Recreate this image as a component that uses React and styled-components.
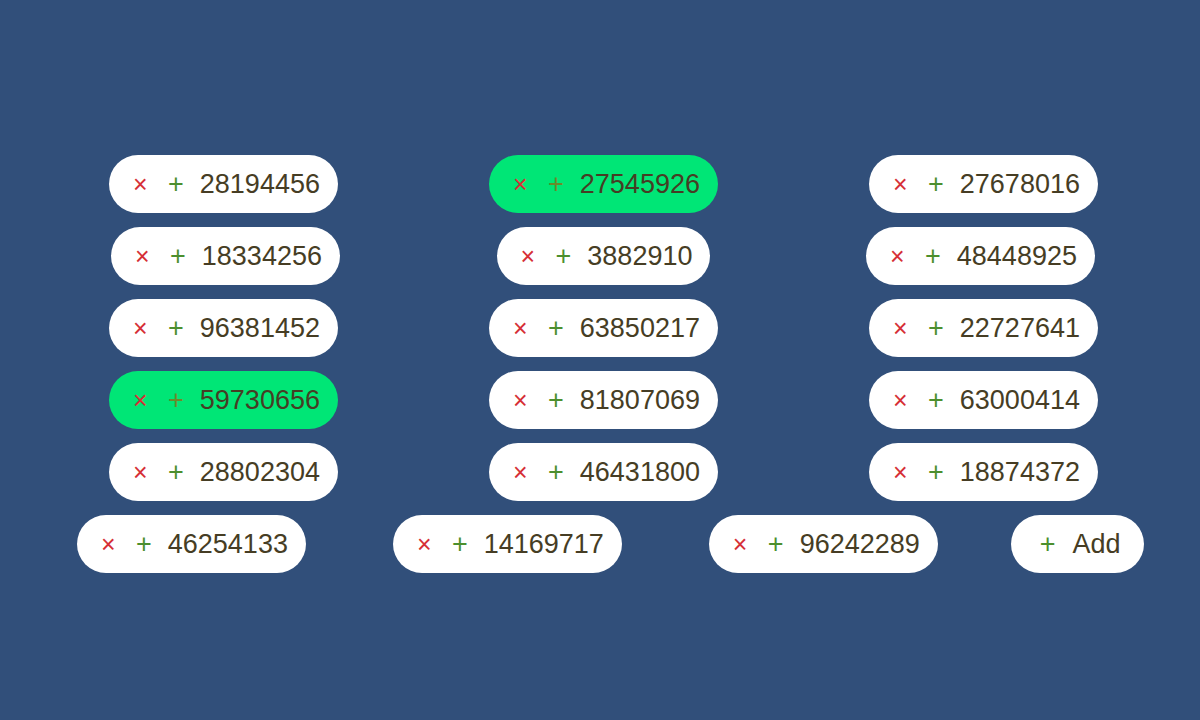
import React from 'react';
import styled, { createGlobalStyle } from 'styled-components';

const GlobalStyle = createGlobalStyle`
  html, body {
    margin: 0;
    padding: 0;
    background: #314f7a;
  }
  body {
    font-family: "Liberation Sans", Arial, sans-serif;
  }
`;

const Page = styled.div`
  width: 1200px;
  height: 720px;
  background: #314f7a;
  box-sizing: border-box;
  padding-top: 155px;
  overflow: hidden;
`;

const Columns = styled.div`
  display: grid;
  grid-template-columns: repeat(3, 229px);
  column-gap: 151px;
  padding-left: 109px;
`;

const Column = styled.div`
  display: flex;
  flex-direction: column;
  align-items: center;
  gap: 14px;
`;

const BottomRow = styled.div`
  display: flex;
  align-items: center;
  gap: 87px;
  padding-left: 77px;
  margin-top: 14px;
`;

const Pill = styled.div`
  display: flex;
  align-items: center;
  box-sizing: border-box;
  height: 58px;
  border-radius: 29px;
  padding: ${p => (p.$add ? '0 23px 0 29px' : '0 18px 0 24px')};
  background: ${p => (p.$active ? '#00e676' : '#ffffff')};
  margin-left: ${p => p.$shift || 0}px;
  margin-right: ${p => -(p.$shift || 0)}px;
  ${p => p.$pull && `margin-left: ${p.$pull}px;`}
  white-space: nowrap;
`;

const Remove = styled.span`
  color: #d62f36;
  font-size: 25px;
  line-height: 1;
  width: 14px;
  flex: 0 0 14px;
  margin-right: 21px;
  display: inline-block;
  text-align: center;
`;

const Plus = styled.span`
  color: ${p => (p.$active ? '#6b8a2a' : '#4c8f2e')};
  font-size: 27px;
  line-height: 1;
  margin-right: ${p => (p.$add ? 17 : 16)}px;
`;

const Value = styled.span`
  color: #463d24;
  font-size: 27px;
  line-height: 1;
`;

const columns = [
  [
    { n: '28194456' },
    { n: '18334256', shift: 2 },
    { n: '96381452' },
    { n: '59730656', active: true },
    { n: '28802304' },
  ],
  [
    { n: '27545926', active: true },
    { n: '3882910' },
    { n: '63850217' },
    { n: '81807069' },
    { n: '46431800' },
  ],
  [
    { n: '27678016' },
    { n: '48448925', shift: -3 },
    { n: '22727641' },
    { n: '63000414' },
    { n: '18874372' },
  ],
];

const loose = ['46254133', '14169717', '96242289'];

function NumberPill({ n, active, shift }) {
  return (
    <Pill $active={active} $shift={shift}>
      <Remove>×</Remove>
      <Plus $active={active}>+</Plus>
      <Value>{n}</Value>
    </Pill>
  );
}

export default function App() {
  return (
    <Page>
      <GlobalStyle />
      <Columns>
        {columns.map((col, i) => (
          <Column key={i}>
            {col.map(item => (
              <NumberPill key={item.n} {...item} />
            ))}
          </Column>
        ))}
      </Columns>
      <BottomRow>
        {loose.map(n => (
          <NumberPill key={n} n={n} />
        ))}
        <Pill $add $pull={-14}>
          <Plus $add>+</Plus>
          <Value>Add</Value>
        </Pill>
      </BottomRow>
    </Page>
  );
}
